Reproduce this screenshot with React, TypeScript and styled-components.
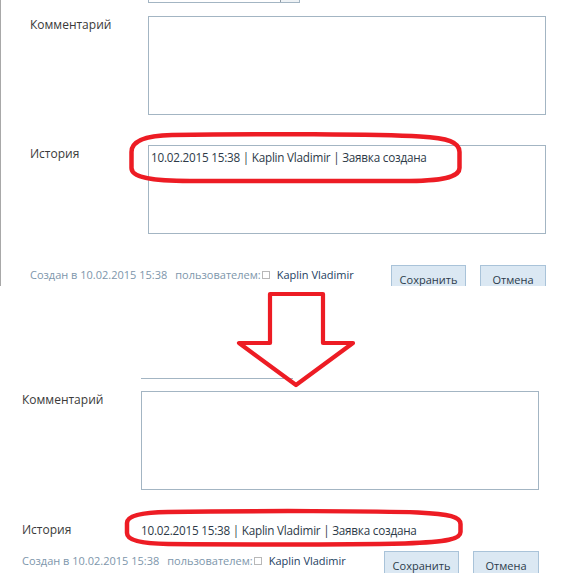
import { FC } from 'react';
import styled, { createGlobalStyle } from 'styled-components';

const GlobalStyle = createGlobalStyle`
   html, body {
      margin: 0;
      padding: 0;
      background: #fff;
      overflow: hidden;
   }
   body {
      font-family: "Open Sans", "Liberation Sans", sans-serif;
   }
`;

const Page = styled.div`
   width: 578px;
   height: 573px;
   overflow: hidden;
   display: flex;
   flex-direction: column;
`;

const Shot = styled.section<{ $inset: number; $bordered?: boolean; $height?: number }>`
   position: relative;
   flex: none;
   padding-left: ${(p) => p.$inset}px;
   border-left: ${(p) => (p.$bordered ? '1px solid #a8a8a8' : '0')};
   height: ${(p) => (p.$height ? `${p.$height}px` : 'auto')};
   overflow: ${(p) => (p.$height ? 'hidden' : 'visible')};
`;

const SelectStub = styled.div<{ $offset: number; $framed: boolean }>`
   box-sizing: border-box;
   display: flex;
   justify-content: flex-end;
   width: 152px;
   height: ${(p) => (p.$framed ? 3 : 2)}px;
   margin-left: ${(p) => p.$offset}px;
   border: 1px solid #a3b5c3;
   border-top: 0;
   border-left-width: ${(p) => (p.$framed ? 1 : 0)}px;
   border-right-width: ${(p) => (p.$framed ? 1 : 0)}px;
`;

const SelectButton = styled.div`
   width: 18px;
   height: 100%;
   border-left: 1px solid #8e9aa4;
   background: #eef2f5;
`;

const FieldRow = styled.div<{ $labelWidth: number; $gap: number }>`
   position: relative;
   display: grid;
   grid-template-columns: ${(p) => p.$labelWidth}px 398px;
   margin-top: ${(p) => p.$gap}px;
`;

const Label = styled.div`
   font-size: 12px;
   line-height: 18px;
   color: #3a3a3a;
`;

const TextBox = styled.div<{ $height: number }>`
   box-sizing: border-box;
   height: ${(p) => p.$height}px;
   padding: 2px 2px;
   border: 1px solid #a3b5c3;
   background: #fff;
   font-size: 11.7px;
   letter-spacing: -0.22px;
   line-height: 18px;
   color: #2d3a48;
   white-space: nowrap;
`;

const HistoryLine = styled.div`
   font-size: 11.7px;
   letter-spacing: -0.22px;
   line-height: 18px;
   color: #2d3a48;
   white-space: nowrap;
`;

const Mark = styled.svg<{ $left: number; $top: number }>`
   position: absolute;
   left: ${(p) => p.$left}px;
   top: ${(p) => p.$top}px;
   overflow: visible;
   pointer-events: none;
`;

const Footer = styled.div<{ $width: number; $gap: number }>`
   display: flex;
   justify-content: space-between;
   align-items: flex-start;
   width: ${(p) => p.$width}px;
   margin-top: ${(p) => p.$gap}px;
`;

const Meta = styled.div`
   display: flex;
   align-items: center;
   padding-top: 1px;
   font-size: 11px;
   line-height: 18px;
   color: #7d96ab;
   white-space: nowrap;
`;

const MetaPart = styled.span`
   margin-left: 8px;
`;

const CheckMark = styled.span`
   box-sizing: border-box;
   width: 8px;
   height: 8px;
   margin-left: 1px;
   border: 1px solid #b8b8b8;
   background: #fff;
`;

const MetaUser = styled.span`
   margin-left: 7px;
   color: #23415f;
`;

const Buttons = styled.div`
   display: flex;
   gap: 14px;
`;

const Button = styled.button<{ $width: number }>`
   box-sizing: border-box;
   width: ${(p) => p.$width}px;
   height: 26px;
   padding: 4px 0 0;
   border: 1px solid #a9c3d9;
   border-radius: 0;
   background: #dbe8f3;
   font-family: inherit;
   font-size: 11px;
   line-height: 18px;
   color: #2b3b4b;
   text-align: center;
   vertical-align: top;
`;

const ArrowGap = styled.div`
   position: relative;
   flex: none;
   height: 91px;
   z-index: 2;
`;

const Arrow = styled.svg`
   position: absolute;
   left: 230px;
   top: 2px;
   overflow: visible;
`;

const RED = '#ed1c24';

const HISTORY = '10.02.2015 15:38 | Kaplin Vladimir | Заявка создана';

const ringBefore =
   'M 45 5 C 133 3.5, 253 4, 293 6.5 C 321 8, 332.5 12, 332.5 22 L 332.5 38 C 332.5 46, 321 50.5, 283 51 L 63 51 C 23 51, 4.5 47, 4.5 38 L 4.5 22 C 4.5 11, 18 5.5, 45 5 Z';

const ringAfter =
   'M 45 4 C 137 2.5, 257 3, 295 4.5 C 327 6, 337.5 9, 337.5 16 L 337.5 24 C 337.5 31, 325 34, 282 35.5 C 207 37, 117 36.5, 45 36 C 17 35.5, 4 32, 4 25 L 4 15 C 4 8, 17 4.5, 45 4 Z';

interface ShotProps {
   after?: boolean;
}

const FormShot: FC<ShotProps> = ({ after }) => {
   const labelWidth = after ? 119 : 118;

   return (
      <Shot $inset={after ? 22 : 29} $bordered={!after} $height={after ? undefined : 286}>
         <SelectStub $offset={labelWidth} $framed={!after}>
            {!after && <SelectButton />}
         </SelectStub>

         <FieldRow $labelWidth={labelWidth} $gap={after ? 12 : 13}>
            <Label>Комментарий</Label>
            <TextBox $height={99} />
         </FieldRow>

         <FieldRow $labelWidth={labelWidth} $gap={after ? 31 : 30}>
            <Label>История</Label>
            {after ? <HistoryLine>{HISTORY}</HistoryLine> : <TextBox $height={89}>{HISTORY}</TextBox>}
            <Mark
               $left={after ? 101 : 97}
               $top={after ? -13 : -15}
               width={after ? 342 : 337}
               height={after ? 41 : 56}
            >
               <path d={after ? ringAfter : ringBefore} fill="none" stroke={RED} strokeWidth={4.5} />
            </Mark>
         </FieldRow>

         <Footer $width={labelWidth + 398} $gap={after ? 12 : 31}>
            <Meta>
               <span>Создан в 10.02.2015 15:38</span>
               <MetaPart>пользователем:</MetaPart>
               <CheckMark />
               <MetaUser>Kaplin Vladimir</MetaUser>
            </Meta>
            <Buttons>
               <Button $width={75}>Сохранить</Button>
               <Button $width={66}>Отмена</Button>
            </Buttons>
         </Footer>
      </Shot>
   );
};

const App: FC = (): JSX.Element => {
   return (
      <Page>
         <GlobalStyle />
         <FormShot />
         <ArrowGap>
            <Arrow width={132} height={104}>
               <path
                  d="M 40 6 L 93 6 L 93 55 L 123 55 L 66 97 L 9 55 L 40 55 Z"
                  fill="none"
                  stroke={RED}
                  strokeWidth={4.2}
                  strokeLinejoin="round"
               />
            </Arrow>
         </ArrowGap>
         <FormShot after />
      </Page>
   );
};

export default App;
